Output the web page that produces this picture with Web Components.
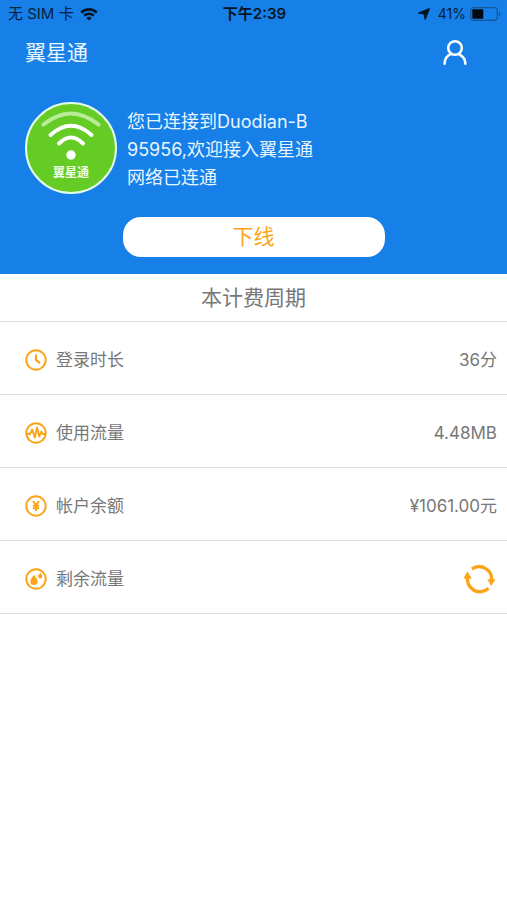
<!DOCTYPE html>
<html lang="zh-CN">
<head>
<meta charset="UTF-8">
<meta name="viewport" content="width=device-width, initial-scale=1">
<title>翼星通</title>
<style>
  body {
    margin: 0;
    background: #fff;
    color: #777;
    font-family: Inter, "Noto Sans CJK SC", sans-serif;
    font-size: 17px;
    --primary: #1680e8;
    --accent: #faa519;
    --line: #dedede;
  }
</style>
</head>
<body>
<wifi-app></wifi-app>
<script>
class StatusBar extends HTMLElement {
  connectedCallback() {
    this.attachShadow({ mode: 'open' });
    this.shadowRoot.innerHTML = `
      <style>
        :host {
          display: grid;
          grid-template-columns: 1fr auto 1fr;
          align-items: center;
          height: 28px;
          padding: 0 6px 0 8px;
          color: #06203c;
          font-size: 15px;
          line-height: 20px;
        }
        .side { display: flex; align-items: center; gap: 6px; }
        .end { justify-content: flex-end; gap: 4px; font-size: 14px; }
        .place { margin-right: 4px; }
        .time { font-weight: 600; color: #041526; }
        svg { display: block; }
      </style>
      <div class="side">
        <span>无 SIM 卡</span>
        <svg width="18" height="13" viewBox="0 0 18 13" fill="none" stroke="#041526" stroke-width="2.6">
          <path d="M1.200 4.600a11 11 0 0 1 15.600 0M4.200 7.700a6.800 6.800 0 0 1 9.600 0"/>
          <path d="M9 12.600 6.300 10a3.800 3.800 0 0 1 5.400 0z" fill="#041526" stroke="none"/>
        </svg>
      </div>
      <span class="time">下午2:39</span>
      <div class="side end">
        <svg class="place" width="12" height="12" viewBox="0 0 12 12"><path d="M11.600.400 7.200 11.600 6 6 .400 5z" fill="#041526" stroke="#041526" stroke-linejoin="round"/></svg>
        <span>41%</span>
        <svg width="31" height="14" viewBox="0 0 31 14">
          <rect x=".7" y=".7" width="26.6" height="12.6" rx="3" fill="none" stroke="#155593" stroke-width="1.2"/>
          <rect x="2.3" y="2.3" width="11" height="9.4" rx="1" fill="#020b14"/>
          <path d="M28.800 4.700a2.500 2.500 0 0 1 0 4.600z" fill="#155593"/>
        </svg>
      </div>
    `;
  }
}
customElements.define('status-bar', StatusBar);

class AppBar extends HTMLElement {
  connectedCallback() {
    this.attachShadow({ mode: 'open' });
    this.shadowRoot.innerHTML = `
      <style>
        :host {
          display: flex;
          align-items: center;
          justify-content: space-between;
          height: 50px;
          padding: 0 38px 0 25px;
          color: #e9f5ff;
        }
        h1 { margin: 0; font-size: 21px; font-weight: 400; line-height: 28px; }
        button { padding: 0; border: 0; background: none; cursor: pointer; }
        svg { display: block; }
      </style>
      <h1><slot></slot></h1>
      <button type="button" aria-label="我的账户">
        <svg width="28" height="28" viewBox="0 0 28 28" fill="none" stroke="#fff" stroke-width="2.5" stroke-linecap="round">
          <circle cx="14" cy="9" r="6.8"/>
          <path d="M3.600 24.700c.2-5 2.800-8.500 7-9.800M18.600 15.600c3.500 1.700 5.600 4.900 5.800 9.100"/>
        </svg>
      </button>
    `;
  }
}
customElements.define('app-bar', AppBar);

class BrandLogo extends HTMLElement {
  connectedCallback() {
    this.attachShadow({ mode: 'open' });
    this.shadowRoot.innerHTML = `
      <style>
        :host { display: block; flex: none; width: 92px; height: 92px; }
        svg { display: block; }
        text { font-size: 12px; font-weight: 700; }
      </style>
      <svg width="92" height="92" viewBox="0 0 92 92">
        <circle cx="46" cy="46" r="45" fill="#65cc25" stroke="#e5fbe9" stroke-width="2"/>
        <g fill="none" stroke="#fff" stroke-linecap="round">
          <path d="M18.500 22.500Q46 .5 73.500 22.500" stroke="#b9eb98" stroke-width="4"/>
          <path d="M25.500 33Q46 14.500 66.500 33" stroke-width="4"/>
          <path d="M34 41.500Q46 29.500 58 41.500" stroke-width="4"/>
        </g>
        <circle cx="46" cy="53" r="4.700" fill="#fff"/>
        <text x="46" y="75" text-anchor="middle" fill="#f1ffe9">翼星通</text>
      </svg>
    `;
  }
}
customElements.define('brand-logo', BrandLogo);

class ConnectionPanel extends HTMLElement {
  connectedCallback() {
    this.attachShadow({ mode: 'open' });
    this.shadowRoot.innerHTML = `
      <style>
        :host { display: block; padding: 24px 25px 17px; color: #e9f5ff; }
        .info { display: flex; align-items: center; gap: 10px; }
        p { margin: 0; padding-top: 4px; font-size: 18px; line-height: 28px; }
        button {
          display: block;
          width: 52%;
          min-width: 262px;
          height: 40px;
          margin: 23px auto 0;
          padding: 0;
          border: 0;
          border-radius: 18px;
          background: #fff;
          color: var(--accent);
          font: inherit;
          font-size: 21px;
          line-height: 28px;
          cursor: pointer;
        }
      </style>
      <div class="info">
        <brand-logo></brand-logo>
        <p><slot></slot></p>
      </div>
      <button type="button">下线</button>
    `;
  }
}
customElements.define('connection-panel', ConnectionPanel);

const icons = {
  clock: '<path d="M11 5.500V11l4 3" stroke-width="2.200"/>',
  pulse: '<path d="M2 12h3l2.300-4.500 2.500 8L12 5.500l2.200 9 2-5L17.500 12H20" stroke-width="1.900"/>',
  yuan: '<path d="M8 6l3 4.300L14 6M11 10v6M7.800 10.800h6.400M7.800 13.300h6.400" stroke-width="2"/>',
  drops: '<path d="M9 6.800c2 2.800 3.700 4.700 3.700 6.500a3.700 3.700 0 0 1-7.400 0c0-1.800 1.700-3.700 3.700-6.500zM15.300 4.800c1.300 1.700 2.100 2.600 2.100 3.600a2.100 2.100 0 0 1-4.200 0c0-1 .8-1.900 2.100-3.600z" fill="#faa519" stroke="none"/>'
};

class UsageRow extends HTMLElement {
  connectedCallback() {
    this.attachShadow({ mode: 'open' });
    this.shadowRoot.innerHTML = `
      <style>
        :host {
          display: flex;
          align-items: center;
          box-sizing: border-box;
          min-height: 73px;
          padding: 4px 10px 0 25px;
          border-bottom: 1px solid var(--line);
          line-height: 24px;
        }
        .label { flex: 1; margin-left: 9px; }
        svg { display: block; }
      </style>
      <svg width="22" height="22" viewBox="0 0 22 22" fill="none" stroke="#faa519" stroke-linejoin="round">
        <circle cx="11" cy="11" r="9.700" stroke-width="2"/>
        ${icons[this.getAttribute('icon')]}
      </svg>
      <span class="label">${this.getAttribute('label')}</span>
      <slot></slot>
    `;
  }
}
customElements.define('usage-row', UsageRow);

class RefreshButton extends HTMLElement {
  connectedCallback() {
    this.attachShadow({ mode: 'open' });
    this.shadowRoot.innerHTML = `
      <style>
        :host { display: block; }
        button { display: block; padding: 0; border: 0; background: none; cursor: pointer; }
        svg { display: block; }
      </style>
      <button type="button" aria-label="刷新">
        <svg width="34" height="30" viewBox="0 0 34 30">
          <g fill="none" stroke="#faa519" stroke-width="3.400">
            <path d="M9 5A12.500 12.500 0 0 1 28.500 17"/>
            <path d="M25.500 24.300A12.500 12.500 0 0 1 4.800 12"/>
          </g>
          <path d="M24.300 15.300h8.200l-4.400 6.800zM.5 14.500h8.400L4.300 7.500z" fill="#faa519"/>
        </svg>
      </button>
    `;
  }
}
customElements.define('refresh-button', RefreshButton);

class WifiApp extends HTMLElement {
  connectedCallback() {
    this.attachShadow({ mode: 'open' });
    this.shadowRoot.innerHTML = `
      <style>
        :host { display: block; }
        header { background: var(--primary); }
        h2 {
          margin: 0;
          padding: 10px 0 9px;
          border-bottom: 1px solid var(--line);
          font-size: 21px;
          font-weight: 400;
          line-height: 28px;
          text-align: center;
        }
      </style>
      <header>
        <status-bar></status-bar>
        <app-bar>翼星通</app-bar>
        <connection-panel>您已连接到Duodian-B<br>95956,欢迎接入翼星通<br>网络已连通</connection-panel>
      </header>
      <main>
        <h2>本计费周期</h2>
        <usage-row icon="clock" label="登录时长">36分</usage-row>
        <usage-row icon="pulse" label="使用流量">4.48MB</usage-row>
        <usage-row icon="yuan" label="帐户余额">¥1061.00元</usage-row>
        <usage-row icon="drops" label="剩余流量"><refresh-button></refresh-button></usage-row>
      </main>
    `;
  }
}
customElements.define('wifi-app', WifiApp);
</script>
</body>
</html>
